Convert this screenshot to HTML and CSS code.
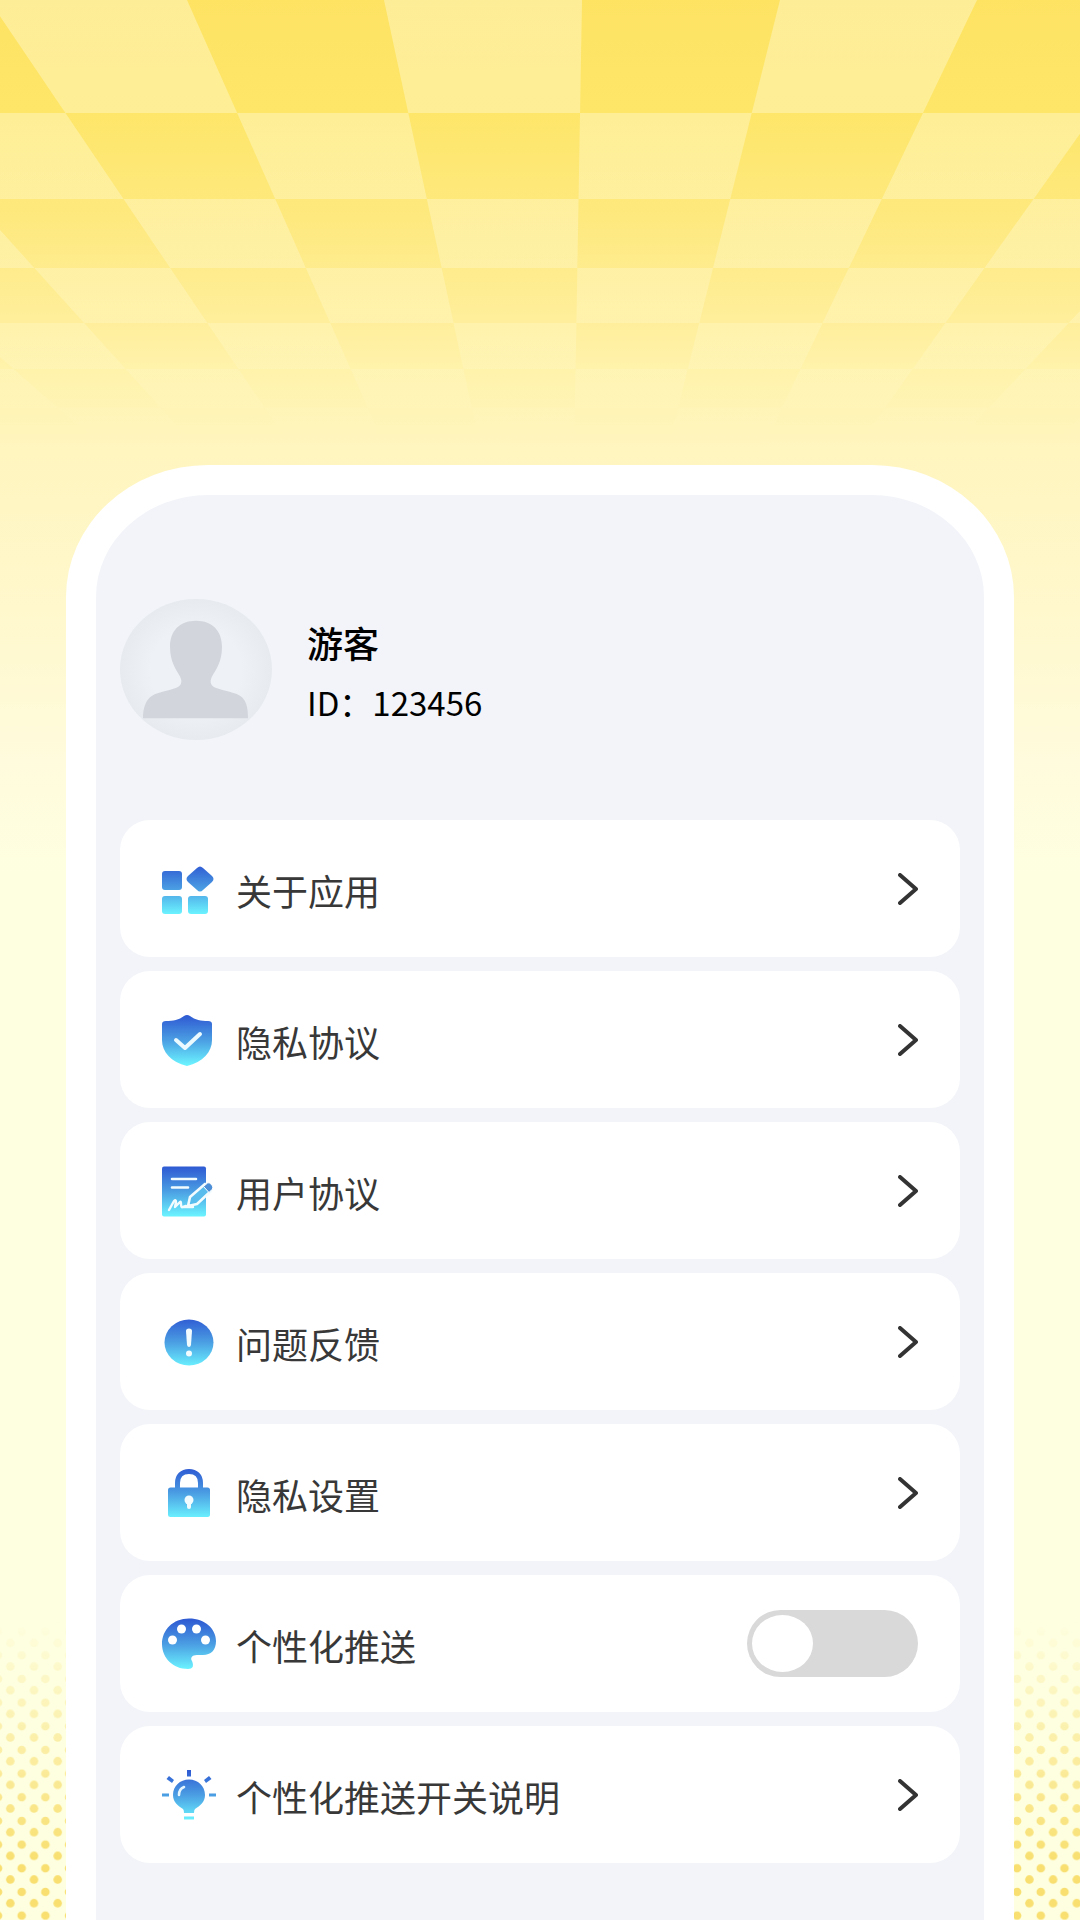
FILE: index.html
```
<!DOCTYPE html>
<html lang="zh-CN">
<head>
  <meta charset="UTF-8">
  <meta name="viewport" content="width=device-width, initial-scale=1.0">
  <title>我的</title>
  <link rel="stylesheet" href="styles.css">
</head>
<body>

  <!-- Background: checkered floor on top, dots at the bottom -->
  <svg class="bg-checks" viewBox="0 0 1080 460" preserveAspectRatio="none" aria-hidden="true">
    <defs>
      <linearGradient id="checkFade" x1="0" y1="0" x2="0" y2="460" gradientUnits="userSpaceOnUse">
        <stop offset="0" stop-color="#fffff0" stop-opacity="0.37"/>
        <stop offset="0.5" stop-color="#fffee4" stop-opacity="0.32"/>
        <stop offset="0.75" stop-color="#fffee4" stop-opacity="0.2"/>
        <stop offset="0.95" stop-color="#fffee4" stop-opacity="0"/>
      </linearGradient>
    </defs>
    <path fill="url(#checkFade)" fill-rule="evenodd" d="
      M-801 0H-604L25 460H-66Z M-406 0H-208L208 460H117Z M-11 0H187L391 460H300Z
      M384 0H582L574 460H483Z M780 0H977L757 460H665Z M1175 0H1372L940 460H848Z
      M1570 0H1768L1122 460H1031Z
      M-900 113H1900V199H-900Z M-900 268H1900V323H-900Z M-900 369H1900V408H-900Z"/>
  </svg>
  <svg class="bg-dots" aria-hidden="true">
    <defs>
      <pattern id="dots" x="-7" y="0" width="23.7" height="23.67" patternUnits="userSpaceOnUse">
        <circle cx="17.3" cy="19.2" r="4.3" fill="#f8df70"/>
        <circle cx="5" cy="7.9" r="4.3" fill="#f8df70"/>
      </pattern>
    </defs>
    <rect width="100%" height="100%" fill="url(#dots)"/>
  </svg>

  <!-- Shared icon gradient -->
  <svg class="icon-defs" aria-hidden="true">
    <defs>
      <linearGradient id="blue" x1="0" y1="3" x2="0" y2="52" gradientUnits="userSpaceOnUse">
        <stop offset="0" stop-color="#2f5bd3"/>
        <stop offset="0.5" stop-color="#4b9fe3"/>
        <stop offset="1" stop-color="#6bf3ff"/>
      </linearGradient>
    </defs>
  </svg>

  <main class="phone">

    <!-- Profile -->
    <section class="profile">
      <svg class="avatar" viewBox="0 0 152 142" preserveAspectRatio="none" aria-hidden="true">
        <defs>
          <radialGradient id="avatarBg">
            <stop offset="0.6" stop-color="#eef1f6"/>
            <stop offset="1" stop-color="#e7ebf0"/>
          </radialGradient>
        </defs>
        <ellipse cx="76" cy="71" rx="76" ry="71" fill="url(#avatarBg)"/>
        <path fill="#d2d6dc" d="M76 22C93 22 102 33 102 48C102 63 96 71 92 78C89 84 91 88 97 90C105 93 116 94 122 99C127 104 128 111 128 120H23C23 111 25 104 30 99C36 94 47 93 55 90C61 88 63 84 60 78C56 71 50 63 50 48C50 33 59 22 76 22Z"/>
      </svg>
      <div class="profile-info">
        <h1 class="profile-name">游客</h1>
        <p class="profile-id">ID：123456</p>
      </div>
    </section>

    <!-- Menu -->
    <ul class="menu">
      <li>
        <a class="menu-item" href="#about">
          <svg class="icon" viewBox="0 0 54 54" aria-hidden="true">
            <g fill="url(#blue)">
              <path d="M3 9H17Q20 9 20 12V25Q20 28 17 28H3Q0 28 0 25V12Q0 9 3 9Z"/>
              <path d="M35 6Q38 3 41 6L50 14Q53 17 50 20L41 28Q38 31 35 28L26 20Q23 17 26 14Z"/>
              <path d="M3 34H17Q20 34 20 37V49Q20 52 17 52H3Q0 52 0 49V37Q0 34 3 34Z"/>
              <path d="M29 34H43Q46 34 46 37V49Q46 52 43 52H29Q26 52 26 49V37Q26 34 29 34Z"/>
            </g>
          </svg>
          <span class="menu-text">关于应用</span>
          <svg class="chevron" viewBox="0 0 20 32" aria-hidden="true"><path d="M2 2L18 16L2 30"/></svg>
        </a>
      </li>
      <li>
        <a class="menu-item" href="#privacy">
          <svg class="icon" viewBox="0 0 54 54" aria-hidden="true">
            <path fill="url(#blue)" d="M22 3Q25 1 28 3C33 7 39 8 46 8Q50 8 50 11V27C50 39 41 49 25 53C9 49 0 39 0 27V11Q0 8 4 8C11 8 17 7 22 3Z"/>
            <path fill="none" stroke="#eafaff" stroke-width="4" stroke-linecap="round" stroke-linejoin="round" d="M14 27L23 35L38 21"/>
          </svg>
          <span class="menu-text">隐私协议</span>
          <svg class="chevron" viewBox="0 0 20 32" aria-hidden="true"><path d="M2 2L18 16L2 30"/></svg>
        </a>
      </li>
      <li>
        <a class="menu-item" href="#agreement">
          <svg class="icon" viewBox="0 0 54 54" aria-hidden="true">
            <rect x="0" y="2.500" width="44" height="50" rx="2" fill="url(#blue)"/>
            <g fill="none" stroke="#f2fcff" stroke-linecap="round" stroke-linejoin="round">
              <path stroke-width="2.600" d="M10 15H34M10 23.500H26"/>
              <path stroke-width="2.400" d="M7 46L12 37Q14 35 14 38L13 43L18 38Q19 37 19 40Q19 44 21 43L24 42M23 43H31"/>
              <path fill="#58bced" stroke-width="2.600" d="M26 42L28 33L43 20L49 27L35 40Z"/>
            </g>
            <path fill="#4d8fd6" stroke="#fff" stroke-width="1" d="M41.500 22.500L45.500 19Q47 18 49 20L50.500 22Q51.500 24 50 25.500L47 28.500Z"/>
          </svg>
          <span class="menu-text">用户协议</span>
          <svg class="chevron" viewBox="0 0 20 32" aria-hidden="true"><path d="M2 2L18 16L2 30"/></svg>
        </a>
      </li>
      <li>
        <a class="menu-item" href="#feedback">
          <svg class="icon" viewBox="0 0 54 54" aria-hidden="true">
            <ellipse cx="27" cy="27.500" rx="24.500" ry="23" fill="url(#blue)"/>
            <path fill="#f2fcff" d="M24 16Q24 13.500 27 13.500Q30 13.500 30 16L29 30Q28.500 32 27 32Q25.500 32 25 30Z"/>
            <circle cx="27" cy="38.500" r="3" fill="#f2fcff"/>
          </svg>
          <span class="menu-text">问题反馈</span>
          <svg class="chevron" viewBox="0 0 20 32" aria-hidden="true"><path d="M2 2L18 16L2 30"/></svg>
        </a>
      </li>
      <li>
        <a class="menu-item" href="#settings">
          <svg class="icon" viewBox="0 0 54 54" aria-hidden="true">
            <path fill="none" stroke="url(#blue)" stroke-width="5" d="M15.500 23V17C15.500 10 20 5.500 27 5.500C34 5.500 38.500 10 38.500 17V23"/>
            <rect x="6" y="21.500" width="42" height="29.500" rx="2.500" fill="url(#blue)"/>
            <circle cx="27" cy="34" r="4.500" fill="#f2fcff"/>
            <path stroke="#f2fcff" stroke-width="4" stroke-linecap="round" d="M27 35V41"/>
          </svg>
          <span class="menu-text">隐私设置</span>
          <svg class="chevron" viewBox="0 0 20 32" aria-hidden="true"><path d="M2 2L18 16L2 30"/></svg>
        </a>
      </li>
      <li>
        <label class="menu-item" for="pushSwitch">
          <svg class="icon" viewBox="0 0 54 54" aria-hidden="true">
            <path fill="url(#blue)" d="M27 1.500C43 1.500 54 12 54 24C54 33 49 38 41 38H35C30 38 28 41 30 44C32 49 31 52 26 52C11 52 0 41 0 27C0 13 11 1.500 27 1.500Z"/>
            <g fill="#fff">
              <circle cx="10.500" cy="23" r="4.500"/>
              <circle cx="19.500" cy="12" r="4.500"/>
              <circle cx="34.500" cy="12" r="4.500"/>
              <circle cx="43.500" cy="23" r="4.500"/>
            </g>
          </svg>
          <span class="menu-text">个性化推送</span>
          <input class="switch" type="checkbox" id="pushSwitch">
        </label>
      </li>
      <li>
        <a class="menu-item" href="#push-info">
          <svg class="icon" viewBox="0 0 54 54" aria-hidden="true">
            <path fill="url(#blue)" d="M27 11.500C36 11.500 43 18 43 27C43 34 38 38 33 41Q32 42 32 45H22Q22 42 21 41C16 38 11 34 11 27C11 18 18 11.500 27 11.500Z"/>
            <path fill="url(#blue)" d="M22 48.500H32V51.500H22Z"/>
            <path fill="url(#blue)" d="M25 2H29V8.500H25ZM0 25.500H7V28.500H0ZM47 25.500H54V28.500H47ZM7 8L12 12L10 15L4.500 11ZM47 8L42 12L44 15L49.500 11Z"/>
            <path fill="none" stroke="#e6f6ff" stroke-width="2.600" stroke-linecap="round" d="M17 27Q17 21 22 19"/>
          </svg>
          <span class="menu-text">个性化推送开关说明</span>
          <svg class="chevron" viewBox="0 0 20 32" aria-hidden="true"><path d="M2 2L18 16L2 30"/></svg>
        </a>
      </li>
    </ul>
  </main>

</body>
</html>
```

FILE: styles.css
```
* {
  box-sizing: border-box;
}
body {
  font-family: "Noto Sans CJK SC", sans-serif;
  background: #feffe1 linear-gradient(#fee363 0, #fee669 110px, #fee97f 220px, #ffee98 310px, #fff3ae 380px, #fff5bf 450px, #fff7c8 560px, #fffbdc 760px, #feffe1 880px) no-repeat;
  color: #000;
  margin: 0;
  min-height: 100vh;
  display: flex;
  flex-direction: column;
  position: relative;
}
/* Background */
.bg-checks {
  position: absolute;
  top: 0;
  left: 0;
  width: 100%;
  height: 460px;
}
.bg-dots {
  position: absolute;
  bottom: 0;
  left: 0;
  width: 100%;
  height: 320px;
  -webkit-mask-image: linear-gradient(transparent 20px, #000 260px);
  mask-image: linear-gradient(transparent 20px, #000 260px);
}
.icon-defs {
  position: absolute;
  width: 0;
  height: 0;
}
/* Phone Frame */
.phone {
  position: relative;
  flex: 1;
  margin: 465px 66px 0;
  padding: 104px 24px 56px;
  background-color: #f2f4f9;
  border: 30px solid #fff;
  border-bottom: none;
  border-radius: 142px 142px 0 0 / 132px 132px 0 0;
}
/* Profile */
.profile {
  display: flex;
  align-items: center;
  gap: 35px;
  margin-bottom: 80px;
}
.avatar {
  width: 152px;
  height: 141px;
}
.profile-info {
  padding-top: 4px;
}
.profile-name {
  margin: 0;
  font-size: 36px;
  font-weight: 500;
  line-height: 60px;
}
.profile-id {
  margin: 0;
  font-size: 33px;
  line-height: 60px;
}
/* Menu */
.menu {
  list-style: none;
  margin: 0;
  padding: 0;
  display: flex;
  flex-direction: column;
  gap: 14px;
}
.menu-item {
  display: flex;
  align-items: center;
  gap: 20px;
  height: 137px;
  padding: 0 42px;
  background-color: #fff;
  border-radius: 30px;
  color: #383838;
  text-decoration: none;
  cursor: pointer;
}
.icon {
  width: 54px;
  height: 54px;
  flex: none;
}
.menu-text {
  flex: 1;
  padding-top: 2px;
  font-size: 36px;
  line-height: 54px;
}
.chevron {
  width: 20px;
  height: 32px;
  flex: none;
}
.chevron path {
  fill: none;
  stroke: #333;
  stroke-width: 4;
  stroke-linecap: round;
  stroke-linejoin: round;
}
/* Switch */
.switch {
  appearance: none;
  -webkit-appearance: none;
  display: flex;
  width: 171px;
  height: 67px;
  margin: 0;
  padding: 5px;
  background-color: #d9d9d9;
  border-radius: 34px;
  cursor: pointer;
}
.switch::before {
  content: "";
  width: 61px;
  height: 57px;
  background-color: #fff;
  border-radius: 50%;
}
.switch:checked {
  justify-content: flex-end;
  background-color: #4b9fe3;
}
```
